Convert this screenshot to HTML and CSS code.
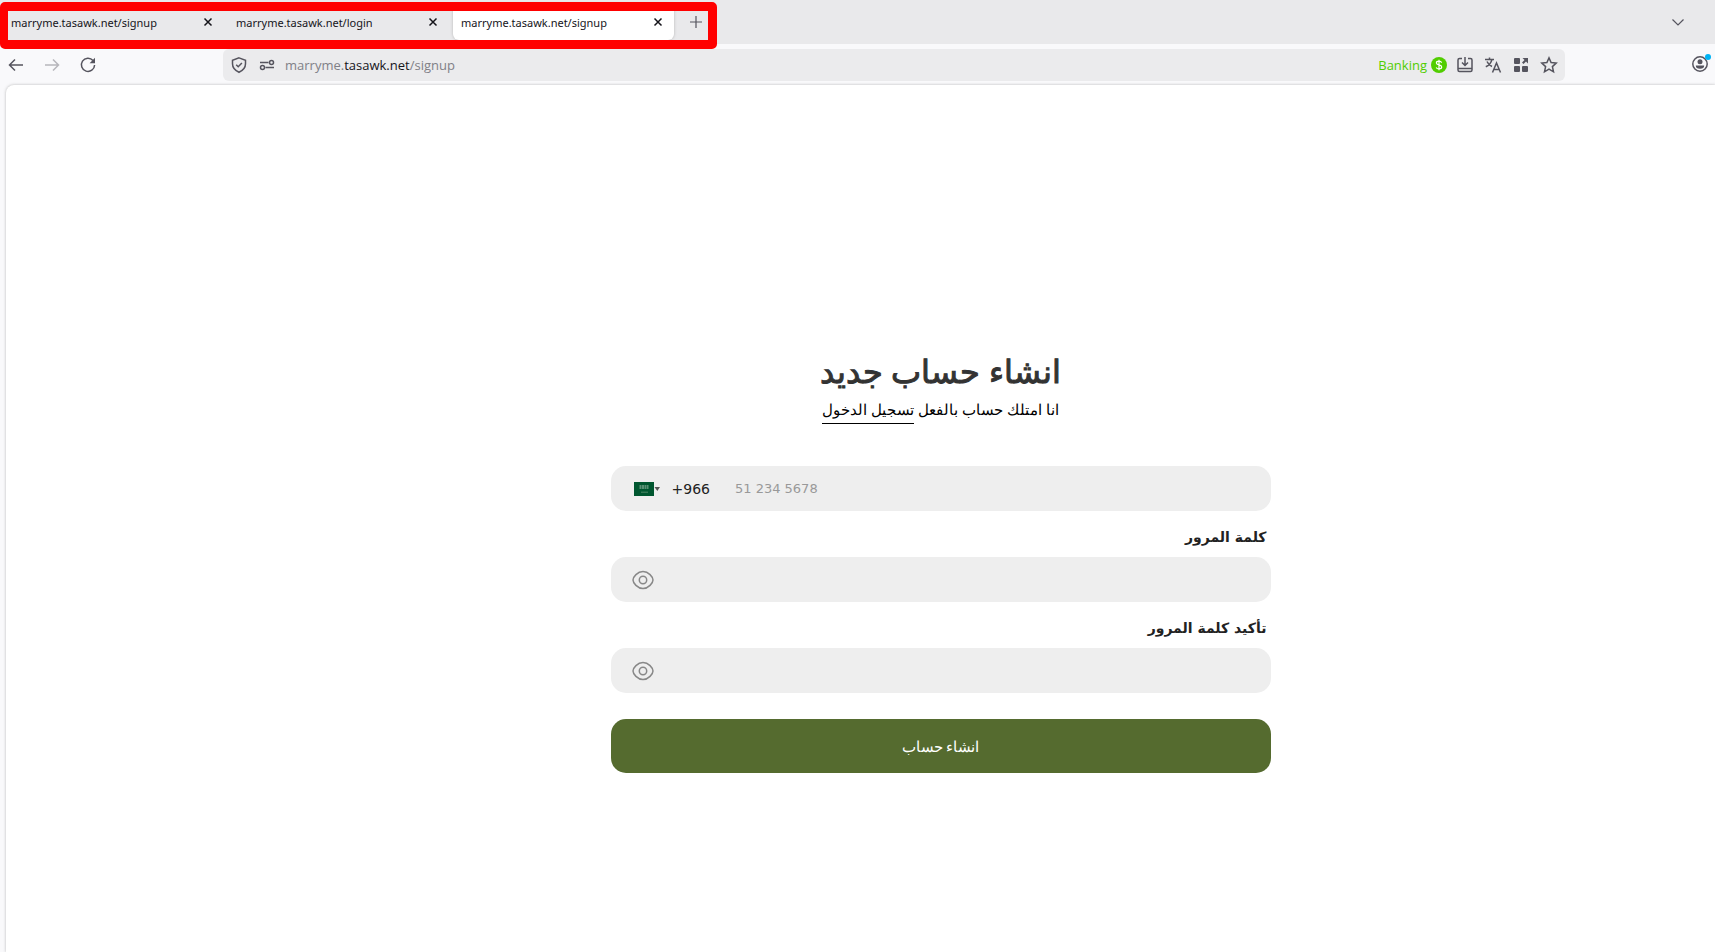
FILE: index.html
```html
<!DOCTYPE html>
<html lang="ar">
<head>
<meta charset="utf-8">
<meta name="viewport" content="width=device-width, initial-scale=1">
<title>marryme.tasawk.net/signup</title>
<link rel="stylesheet" href="styles.css">
</head>
<body>
<div class="browser">
  <header class="tabbar">
    <div class="tab"><span class="tab-title">marryme.tasawk.net/signup</span><button class="tab-close" aria-label="Close tab"><svg width="10" height="10" viewBox="0 0 10 10"><path d="M1.500 1.500l7 7M8.500 1.500l-7 7"/></svg></button></div>
    <div class="tab"><span class="tab-title">marryme.tasawk.net/login</span><button class="tab-close" aria-label="Close tab"><svg width="10" height="10" viewBox="0 0 10 10"><path d="M1.500 1.500l7 7M8.500 1.500l-7 7"/></svg></button></div>
    <div class="tab tab-active"><span class="tab-title">marryme.tasawk.net/signup</span><button class="tab-close" aria-label="Close tab"><svg width="10" height="10" viewBox="0 0 10 10"><path d="M1.500 1.500l7 7M8.500 1.500l-7 7"/></svg></button></div>
    <button class="icon-button new-tab" aria-label="New tab"><svg width="14" height="14" viewBox="0 0 14 14"><path d="M7 1v12M1 7h12"/></svg></button>
    <button class="icon-button all-tabs" aria-label="List all tabs"><svg width="14" height="14" viewBox="0 0 14 14"><path d="M1.500 4.500L7 10l5.500-5.500"/></svg></button>
    <div class="highlight"></div>
  </header>
  <nav class="toolbar">
    <div class="nav-buttons">
      <button class="icon-button" aria-label="Back"><svg width="16" height="16" viewBox="0 0 16 16"><path d="M15 8H2M7 2.500L1.500 8 7 13.500"/></svg></button>
      <button class="icon-button faded" aria-label="Forward"><svg width="16" height="16" viewBox="0 0 16 16"><path d="M1 8h13M9 2.500L14.500 8 9 13.500"/></svg></button>
      <button class="icon-button" aria-label="Reload"><svg width="16" height="16" viewBox="0 0 16 16"><path d="M13 3.500A6.600 6.600 0 1 0 14.600 8"/><path class="solid" d="M15 .8v5.400H9.600z"/></svg></button>
    </div>
    <div class="urlbar">
      <div class="url-actions">
        <button class="icon-button" aria-label="Protection"><svg width="16" height="16" viewBox="0 0 16 16"><path d="M8 .9l6.500 2.400v3.400c0 4-2.500 6.700-6.500 8.600C4 13.400 1.500 10.700 1.500 6.700V3.300z"/><path d="M5.200 7.800l2 2 3.700-3.900"/></svg></button>
        <button class="icon-button" aria-label="Permissions"><svg width="16" height="16" viewBox="0 0 16 16"><path d="M1 5.500h8.500M6.500 10.500H15"/><circle cx="12.500" cy="5.500" r="2"/><circle cx="3.500" cy="10.500" r="2"/></svg></button>
      </div>
      <div class="address"><span>marryme.</span><b>tasawk.net</b><span>/signup</span></div>
      <div class="container-label"><span>Banking</span><svg width="16" height="16" viewBox="0 0 16 16"><circle class="coin" cx="8" cy="8" r="8"/><path class="dollar" d="M10.700 5.600C10 4.500 9 4.200 8 4.200c-1.500 0-2.600.7-2.600 1.800 0 2.600 5.300 1.300 5.300 4 0 1.200-1.200 1.900-2.700 1.900-1.300 0-2.300-.5-2.800-1.500M8 2.700v10.600"/></svg></div>
      <div class="url-actions">
        <button class="icon-button" aria-label="Install"><svg width="16" height="16" viewBox="0 0 16 16"><path d="M5 1.500H2.500Q1 1.500 1 3v10q0 1.500 1.500 1.500h11Q15 14.500 15 13V3q0-1.500-1.500-1.500H11M1 11.500h14M8 0v8M5 5.500l3 3 3-3"/></svg></button>
        <button class="icon-button" aria-label="Translate"><svg width="16" height="16" viewBox="0 0 16 16"><path d="M0 2.500h9M4.500.5v2M7 2.500C6 6 4 8.500.8 9.800M2 4.500c1 2.300 3 4.200 5 5M7.500 15.500L11.500 6l4 9.500M9 12.500h5"/></svg></button>
        <button class="icon-button" aria-label="Extensions"><svg width="16" height="16" viewBox="0 0 16 16"><rect class="solid" x="1" y="1" width="6" height="6" rx="1"/><rect class="solid" x="1" y="9" width="6" height="6" rx="1"/><rect class="solid" x="9" y="9" width="6" height="6" rx="1"/><path class="solid" d="M9.500 1H15v5.500l-2-2L10.500 7 9 5.500 11.500 3z"/></svg></button>
        <button class="icon-button" aria-label="Bookmark"><svg width="16" height="16" viewBox="0 0 16 16"><path d="M8 .9l2.100 4.700 5.100.5-3.800 3.500 1.100 5.200L8 12.200l-4.500 2.600 1.100-5.200L.8 6.100l5.100-.5z"/></svg></button>
      </div>
    </div>
    <button class="icon-button account" aria-label="Account"><svg width="20" height="20" viewBox="0 0 20 20"><circle cx="8" cy="11" r="7.200"/><circle class="solid" cx="8" cy="8.800" r="2.500"/><path class="solid" d="M3.800 12.500h8.400q0 3.200-4.200 3.200t-4.200-3.200z"/><circle class="notice" cx="16" cy="4" r="3"/></svg></button>
  </nav>
  <main class="page">
    <form class="signup" dir="rtl">
      <h1>انشاء حساب جديد</h1>
      <p class="login-hint">انا امتلك حساب بالفعل <a href="#login">تسجيل الدخول</a></p>
      <div class="field phone" dir="ltr">
        <button type="button" class="country" aria-label="Saudi Arabia"><svg width="28" height="16" viewBox="0 0 28 16"><rect x="0" y="1" width="20" height="14" fill="#00562f" stroke="none"/><path d="M5.500 5h9M5.500 7h9" stroke="#76a48b" stroke-width="1.500" stroke-dasharray="2 .5"/><path d="M7 11.200h7" stroke="#4e8768" stroke-width="1"/><path d="M20.500 6h5.500l-2.700 4z" fill="#555" stroke="none"/></svg></button>
        <span class="dial-code">+966</span>
        <input type="tel" aria-label="Phone" placeholder="51 234 5678">
      </div>
      <label for="password">كلمة المرور</label>
      <div class="field">
        <input id="password" type="password">
        <button type="button" class="reveal" aria-label="Show password"><svg width="22" height="20" viewBox="0 0 22 20"><path d="M1 10C1 7 5.500 1.500 11 1.500S21 7 21 10s-4.500 8.500-10 8.500S1 13 1 10z"/><circle cx="11" cy="10" r="3.700"/></svg></button>
      </div>
      <label for="confirm">تأكيد كلمة المرور</label>
      <div class="field">
        <input id="confirm" type="password">
        <button type="button" class="reveal" aria-label="Show password"><svg width="22" height="20" viewBox="0 0 22 20"><path d="M1 10C1 7 5.500 1.500 11 1.500S21 7 21 10s-4.500 8.500-10 8.500S1 13 1 10z"/><circle cx="11" cy="10" r="3.700"/></svg></button>
      </div>
      <button class="submit" type="submit">انشاء حساب</button>
    </form>
  </main>
</div>
</body>
</html>
```
FILE: styles.css
```css
* { box-sizing: border-box; }
body { margin: 0; background: #f9f9fb; font-family: "Noto Sans", "Open Sans", sans-serif; }
button, input { font: inherit; border: 0; padding: 0; background: none; color: inherit; }
svg { display: block; fill: none; stroke: currentColor; stroke-width: 1.5; overflow: visible; }
.browser { display: flex; flex-direction: column; min-height: 100vh; }

.tabbar { position: relative; display: flex; align-items: center; gap: 4px; height: 44px; padding: 0 30px 0 3px; background: #e9e9eb; }
.tab { display: flex; align-items: center; justify-content: space-between; width: 221px; height: 36px; padding: 0 11px 0 8px; border-radius: 6px; font-size: 11px; color: #15141a; }
.tab-title { white-space: nowrap; }
.tab-active { height: 36px; background: #fff; box-shadow: 0 0 3px #8888; }
.tab-close svg { stroke-width: 1.5; }
.icon-button { display: grid; place-items: center; color: #55545e; }
.new-tab { margin-left: 11px; }
.new-tab svg, .all-tabs svg { stroke-width: 1.2; }
.all-tabs { margin-left: auto; }
.highlight { position: absolute; left: 0; top: 2px; width: 717px; height: 47px; border: 9px solid #f00; border-left-width: 8px; border-radius: 5px; pointer-events: none; z-index: 1; }

.toolbar { display: flex; align-items: center; height: 41px; padding: 0 3px 0 8px; }
.nav-buttons { display: flex; gap: 20px; width: 215px; }
.faded { opacity: .4; }
.urlbar { display: flex; align-items: center; flex: 1; height: 32px; padding: 0 8px; margin-right: 127px; gap: 10px; border-radius: 6px; background: #ebebed; font-family: "Open Sans", sans-serif; font-size: 13px; }
.address { flex: 1; color: #808087; }
.address b { font-weight: 400; color: #15141a; }
.container-label { display: flex; align-items: center; gap: 4px; color: #51cd00; }
.coin { fill: #51cd00; stroke: none; }
.dollar { stroke: #fff; stroke-width: 1.2; }
.url-actions { display: flex; gap: 12px; }
.solid { fill: currentColor; stroke: none; }
.notice { fill: #00b3f4; stroke: none; }
.account { padding-bottom: 4px; }

.page { flex: 1; margin-left: 6px; padding: 262px 0 80px 160px; border-top-left-radius: 8px; background: #fff; box-shadow: 0 0 3px #8889; }
.signup { display: flex; flex-direction: column; width: 100%; max-width: 660px; margin: 0 auto; color: #000; }
h1 { margin: 0; text-align: center; font-size: 32px; font-weight: 500; line-height: 48px; color: #333; -webkit-text-stroke: 1px #333; }
.login-hint { margin: 0 0 42px; text-align: center; font-size: 15px; line-height: 28px; }
.login-hint a { display: inline-block; color: inherit; text-decoration: none; border-bottom: 1px solid #000; line-height: 27px; }
.field { display: flex; align-items: center; height: 45px; padding: 0 21px; border-radius: 15px; background: #eee; }
.field input { flex: 1; min-width: 0; height: 45px; outline: 0; font-size: 14px; }
.phone { padding-left: 23px; font-family: "DejaVu Sans", sans-serif; }
.dial-code { margin: 0 25px 0 10px; font-size: 14px; color: #222; }
.phone .country + .dial-code + input { font-size: 13px; }
.phone input::placeholder { color: #999; opacity: 1; }
.reveal { color: #888; }
label { padding: 0 4px; margin: 14px 0 8px; font-size: 14px; font-weight: 700; line-height: 24px; color: #222; font-family: "DejaVu Sans", sans-serif; }
.submit { height: 54px; margin-top: 26px; border-radius: 15px; background: #556b2f; color: #fff; font-size: 15px; font-weight: 500; }
```
